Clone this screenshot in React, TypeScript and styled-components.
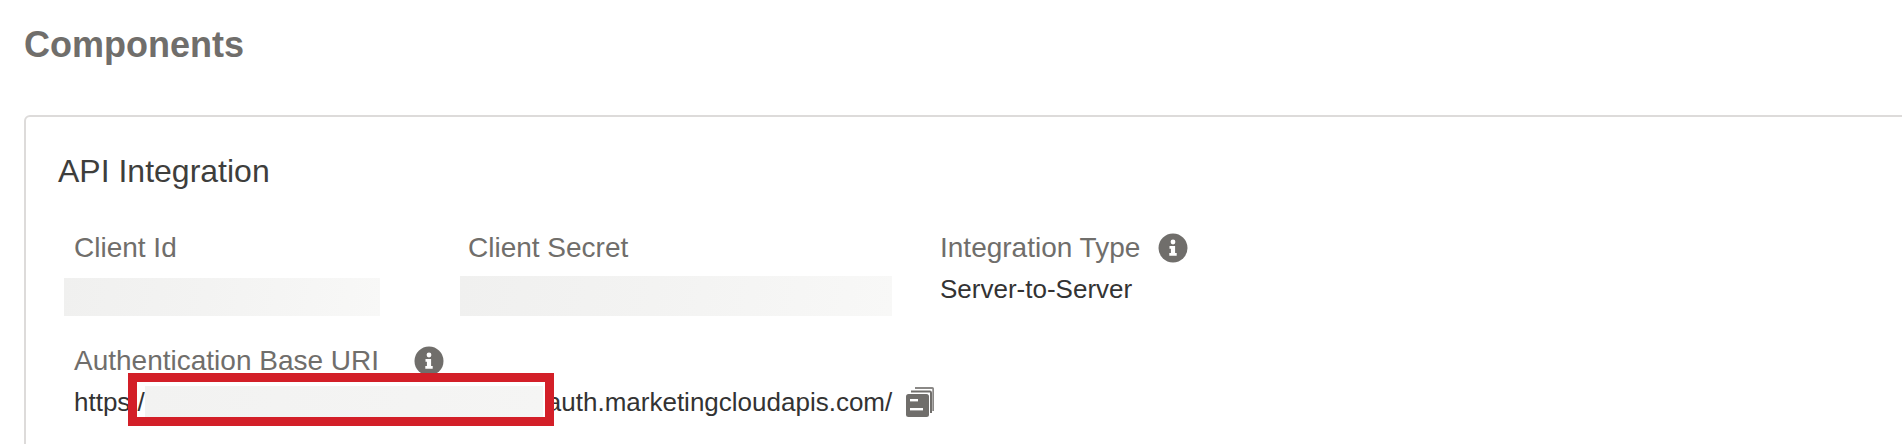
import { FC } from "react";
import styled, { createGlobalStyle } from "styled-components";

const GlobalStyle = createGlobalStyle`
  html, body {
    margin: 0;
    padding: 0;
    background: #fff;
    overflow: hidden;
    font-family: "Liberation Sans", Arial, sans-serif;
  }
`;

const Page = styled.div`
  width: 1902px;
  height: 444px;
  overflow: hidden;
  padding: 25px 0 0 24px;
  box-sizing: border-box;
`;

const PageTitle = styled.h1`
  margin: 0;
  font-size: 36px;
  line-height: 40px;
  font-weight: bold;
  color: #706e6b;
`;

const Card = styled.section`
  margin-top: 50px;
  width: 1950px;
  height: 400px;
  box-sizing: border-box;
  border: 2px solid #dddbda;
  border-radius: 6px;
  padding: 35px 0 0 32px;
`;

const CardTitle = styled.h2`
  margin: 0;
  font-size: 32px;
  line-height: 38px;
  font-weight: normal;
  color: #3e3e3c;
`;

const Row = styled.div`
  display: flex;
  margin-top: 40px;
`;

const Field = styled.div<{ $width: number; $inset: number }>`
  width: ${({ $width }) => $width}px;
  padding-left: ${({ $inset }) => $inset}px;
  box-sizing: border-box;
`;

const LabelRow = styled.div<{ $gap: number }>`
  display: flex;
  align-items: center;
  gap: ${({ $gap }) => $gap}px;
  height: 36px;
`;

const Label = styled.span`
  font-size: 28px;
  line-height: 36px;
  color: #706e6b;
`;

const Value = styled.div`
  margin-top: 7px;
  font-size: 26px;
  line-height: 32px;
  color: #333;
`;

const Redacted = styled.div<{ $width: number; $height: number; $shift: number; $top: number }>`
  width: ${({ $width }) => $width}px;
  height: ${({ $height }) => $height}px;
  margin: ${({ $top, $shift }) => `${$top}px 0 0 ${$shift}px`};
  background: linear-gradient(100deg, #f0f0ef 0%, #f3f3f2 45%, #f8f8f7 100%);
`;

const UriBlock = styled.div`
  margin-top: 27px;
  padding-left: 16px;
`;

const UriRow = styled.div`
  position: relative;
  display: flex;
  align-items: center;
  margin-top: 2px;
  height: 42px;
  font-size: 26px;
  color: #333;
`;

const UriBlur = styled.div`
  width: 398px;
  height: 33px;
  margin-right: 4px;
  background: linear-gradient(100deg, #f2f2f1 0%, #f5f5f4 100%);
`;

const RedBox = styled.div`
  position: absolute;
  left: 54px;
  top: -8px;
  width: 426px;
  height: 53px;
  box-sizing: border-box;
  border: 9px solid #d31f28;
`;

const CopyGlyph = styled.svg`
  margin-left: 14px;
  width: 28px;
  height: 30px;
  flex: none;
`;

const InfoGlyph = styled.svg`
  width: 30px;
  height: 30px;
  flex: none;
`;

const InfoIcon: FC = () => (
  <InfoGlyph viewBox="0 0 30 30">
    <circle cx="15" cy="15" r="14.5" fill="#706e6b" />
    <circle cx="15" cy="9" r="2.4" fill="#fff" />
    <path d="M11.5 13h5.6v7h1.6v2.8h-7.4V20h1.6v-4.2h-1.4z" fill="#fff" />
  </InfoGlyph>
);

const CopyIcon: FC = () => (
  <CopyGlyph viewBox="0 0 28 30">
    <path
      d="M9 1h17a1.2 1.2 0 0 1 1.2 1.2V24"
      fill="none"
      stroke="#8a8886"
      strokeWidth="1.8"
    />
    <path
      d="M5 4.5h19a1.2 1.2 0 0 1 1 1.2V26"
      fill="none"
      stroke="#706e6b"
      strokeWidth="2"
    />
    <rect x="0" y="7" width="23" height="23" rx="2.5" fill="#706e6b" />
    <rect x="4" y="12" width="8" height="2.4" fill="#fff" />
    <rect x="4" y="21" width="13" height="2.4" fill="#fff" />
  </CopyGlyph>
);

const App: FC = () => (
  <Page>
    <GlobalStyle />
    <PageTitle>Components</PageTitle>
    <Card>
      <CardTitle>API Integration</CardTitle>
      <Row>
        <Field $width={394} $inset={16}>
          <LabelRow $gap={0}>
            <Label>Client Id</Label>
          </LabelRow>
          <Redacted $width={316} $height={38} $shift={-10} $top={12} />
        </Field>
        <Field $width={471} $inset={16}>
          <LabelRow $gap={0}>
            <Label>Client Secret</Label>
          </LabelRow>
          <Redacted $width={432} $height={40} $shift={-8} $top={10} />
        </Field>
        <Field $width={500} $inset={17}>
          <LabelRow $gap={18}>
            <Label>Integration Type</Label>
            <InfoIcon />
          </LabelRow>
          <Value>Server-to-Server</Value>
        </Field>
      </Row>
      <UriBlock>
        <LabelRow $gap={35}>
          <Label>Authentication Base URI</Label>
          <InfoIcon />
        </LabelRow>
        <UriRow>
          https:/
          <UriBlur />
          auth.marketingcloudapis.com/
          <CopyIcon />
          <RedBox />
        </UriRow>
      </UriBlock>
    </Card>
  </Page>
);

export default App;
